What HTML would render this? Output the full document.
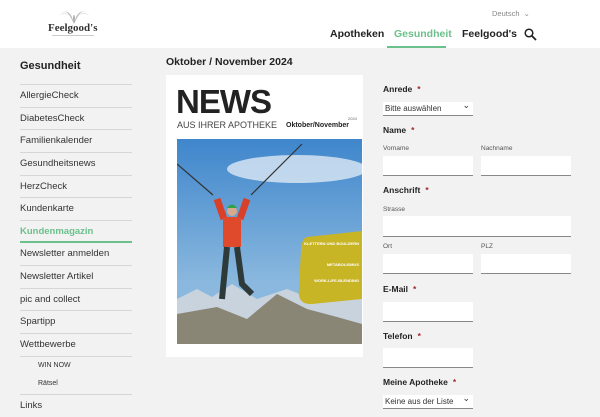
<!DOCTYPE html>
<html><head><meta charset="utf-8"><style>
*{margin:0;padding:0;box-sizing:border-box}
body{width:600px;height:417px;overflow:hidden;background:#f2f2f2;font-family:"Liberation Sans",sans-serif;color:#222;position:relative}
.hdr{position:absolute;left:0;top:0;width:600px;height:48px;background:#fff}
.a{position:absolute;white-space:nowrap}
.nav{font-size:10.5px;font-weight:bold;top:28px}
.it{position:absolute;left:20px;width:112px;font-size:9.5px;color:#333;border-top:1px solid #d6d6d6;height:23px;line-height:22px}
.lab{position:absolute;font-size:8.5px;font-weight:bold;color:#222}
.lab b{color:#a3282c;margin-left:5px}
.sl{position:absolute;font-size:6.5px;color:#555}
.in{position:absolute;background:#fff;border-bottom:1px solid #888}
.sel{position:absolute;background:#fff;border-bottom:1px solid #888;font-size:8px;padding-left:2px;line-height:13px;color:#333}
.sel:after{content:"⌄";position:absolute;right:3px;top:-3px;font-size:9px}
</style></head><body>
<div class="hdr"></div>
<svg class="a" style="left:58px;top:9px" width="32" height="15" viewBox="0 0 32 15"><path d="M16 15 C13 5 6 2 0 7 C6 2 12 4 16 15 C20 4 26 2 32 7 C26 2 19 5 16 15Z" fill="#999"/><path d="M16 15 C11 4 8 1 3 3 C9 1 14 4 16 15 C18 4 23 1 29 3 C24 1 21 4 16 15Z" fill="#bbb"/><path d="M16 15 C14 3 18 3 16 15" fill="#777"/></svg>
<div class="a" style="left:48px;top:22px;font-family:'Liberation Serif',serif;font-weight:bold;font-size:11px;color:#333">Feelgood's</div>
<div class="a" style="left:52px;top:35px;width:42px;border-top:1px solid #ccc"></div>
<div class="a" style="left:492px;top:9px;font-size:7.5px;color:#888">Deutsch &nbsp;⌄</div>
<div class="a nav" style="left:330px">Apotheken</div>
<div class="a nav" style="left:394px;color:#6cc08b">Gesundheit</div>
<div class="a" style="left:387px;top:46px;width:59px;height:2px;background:#6cc08b"></div>
<div class="a nav" style="left:462px">Feelgood's</div>
<svg class="a" style="left:524px;top:28px" width="13" height="13" viewBox="0 0 13 13"><circle cx="5" cy="5" r="3.8" fill="none" stroke="#222" stroke-width="1.5"/><path d="M8 8 L12 12" stroke="#222" stroke-width="1.8"/></svg>

<div class="a" style="left:20px;top:60px;font-size:11px;font-weight:bold">Gesundheit</div>
<div class="it" style="top:84px">AllergieCheck</div>
<div class="it" style="top:107px">DiabetesCheck</div>
<div class="it" style="top:129px">Familienkalender</div>
<div class="it" style="top:152px">Gesundheitsnews</div>
<div class="it" style="top:175px">HerzCheck</div>
<div class="it" style="top:197px">Kundenkarte</div>
<div class="it" style="top:220px;color:#6cc08b;font-weight:bold;border-bottom:2px solid #6cc08b;height:23px">Kundenmagazin</div>
<div class="it" style="top:243px;border-top:none">Newsletter anmelden</div>
<div class="it" style="top:265px">Newsletter Artikel</div>
<div class="it" style="top:288px">pic and collect</div>
<div class="it" style="top:310px">Spartipp</div>
<div class="it" style="top:333px">Wettbewerbe</div>
<div class="it" style="top:356px;padding-left:18px;font-size:7px;height:19px;line-height:18px">WIN NOW</div>
<div class="it" style="top:375px;padding-left:18px;font-size:7px;border-top:none;height:19px;line-height:18px">Rätsel</div>
<div class="it" style="top:394px">Links</div>

<div class="a" style="left:166px;top:56px;font-size:10.5px;font-weight:bold">Oktober / November 2024</div>
<div class="a" style="left:166px;top:75px;width:197px;height:282px;background:#fff"></div>
<div class="a" style="left:176px;top:84px;font-size:33px;font-weight:bold;letter-spacing:-1px;line-height:36px">NEWS</div>
<div class="a" style="left:177px;top:120px;font-size:9px;color:#444">AUS IHRER APOTHEKE</div>
<div class="a" style="left:286px;top:122px;font-size:7px;font-weight:bold">Oktober/November</div>
<div class="a" style="left:348px;top:116px;font-size:4px;color:#666">2024</div>
<svg class="a" style="left:177px;top:139px" width="185" height="205" viewBox="0 0 185 205">
<defs><linearGradient id="s" x1="0" y1="0" x2="0" y2="1"><stop offset="0" stop-color="#3f86cc"/><stop offset="0.7" stop-color="#8ab8de"/></linearGradient></defs>
<rect width="185" height="205" fill="url(#s)"/>
<ellipse cx="120" cy="30" rx="70" ry="14" fill="#dde9f4" opacity="0.8"/>
<path d="M0 160 L20 150 L35 158 L55 145 L80 160 L110 150 L140 162 L185 155 L185 185 L0 185Z" fill="#c9d3de"/>
<path d="M0 205 L0 175 L40 168 L70 180 L100 155 L130 170 L160 178 L185 185 L185 205Z" fill="#8a8676"/>
<path d="M130 98 L185 92 L185 160 L135 165 Q120 166 122 150 L124 110 Q125 99 130 98Z" fill="#c8b526"/>
<path d="M47 80 L40 60 M63 80 L70 60" stroke="#d9402a" stroke-width="7"/>
<rect x="46" y="78" width="18" height="30" fill="#e04a2c"/>
<circle cx="55" cy="72" r="5" fill="#d8a98a"/><path d="M50 69 Q55 62 60 69Z" fill="#2ea34a"/>
<path d="M50 108 L45 160 M60 108 L65 145 L75 155" stroke="#2e3a3a" stroke-width="6" fill="none"/>
<path d="M36 56 L0 25 M74 56 L125 5" stroke="#333" stroke-width="1.2"/>
<text x="182" y="106" font-size="4" fill="#fff" text-anchor="end" font-weight="bold" font-family="Liberation Sans">KLETTERN UND BOULDERN</text>
<text x="182" y="127" font-size="4" fill="#fff" text-anchor="end" font-weight="bold" font-family="Liberation Sans">METABOLISMUS</text>
<text x="182" y="143" font-size="4" fill="#fff" text-anchor="end" font-weight="bold" font-family="Liberation Sans">WORK-LIFE-BLENDING</text>
</svg>

<div class="lab" style="left:383px;top:84px">Anrede<b>*</b></div>
<div class="sel" style="left:383px;top:102px;width:90px">Bitte auswählen</div>
<div class="lab" style="left:383px;top:125px">Name<b>*</b></div>
<div class="sl" style="left:383px;top:145px">Vorname</div>
<div class="sl" style="left:481px;top:145px">Nachname</div>
<div class="in" style="left:383px;top:156px;width:90px;height:20px"></div>
<div class="in" style="left:481px;top:156px;width:90px;height:20px"></div>
<div class="lab" style="left:383px;top:185px">Anschrift<b>*</b></div>
<div class="sl" style="left:383px;top:206px">Strasse</div>
<div class="in" style="left:383px;top:216px;width:188px;height:21px"></div>
<div class="sl" style="left:383px;top:243px">Ort</div>
<div class="sl" style="left:481px;top:243px">PLZ</div>
<div class="in" style="left:383px;top:254px;width:90px;height:20px"></div>
<div class="in" style="left:481px;top:254px;width:90px;height:20px"></div>
<div class="lab" style="left:383px;top:284px">E-Mail<b>*</b></div>
<div class="in" style="left:383px;top:302px;width:90px;height:20px"></div>
<div class="lab" style="left:383px;top:331px">Telefon<b>*</b></div>
<div class="in" style="left:383px;top:348px;width:90px;height:20px"></div>
<div class="lab" style="left:383px;top:377px">Meine Apotheke<b>*</b></div>
<div class="sel" style="left:383px;top:395px;width:90px">Keine aus der Liste</div>
</body></html>
